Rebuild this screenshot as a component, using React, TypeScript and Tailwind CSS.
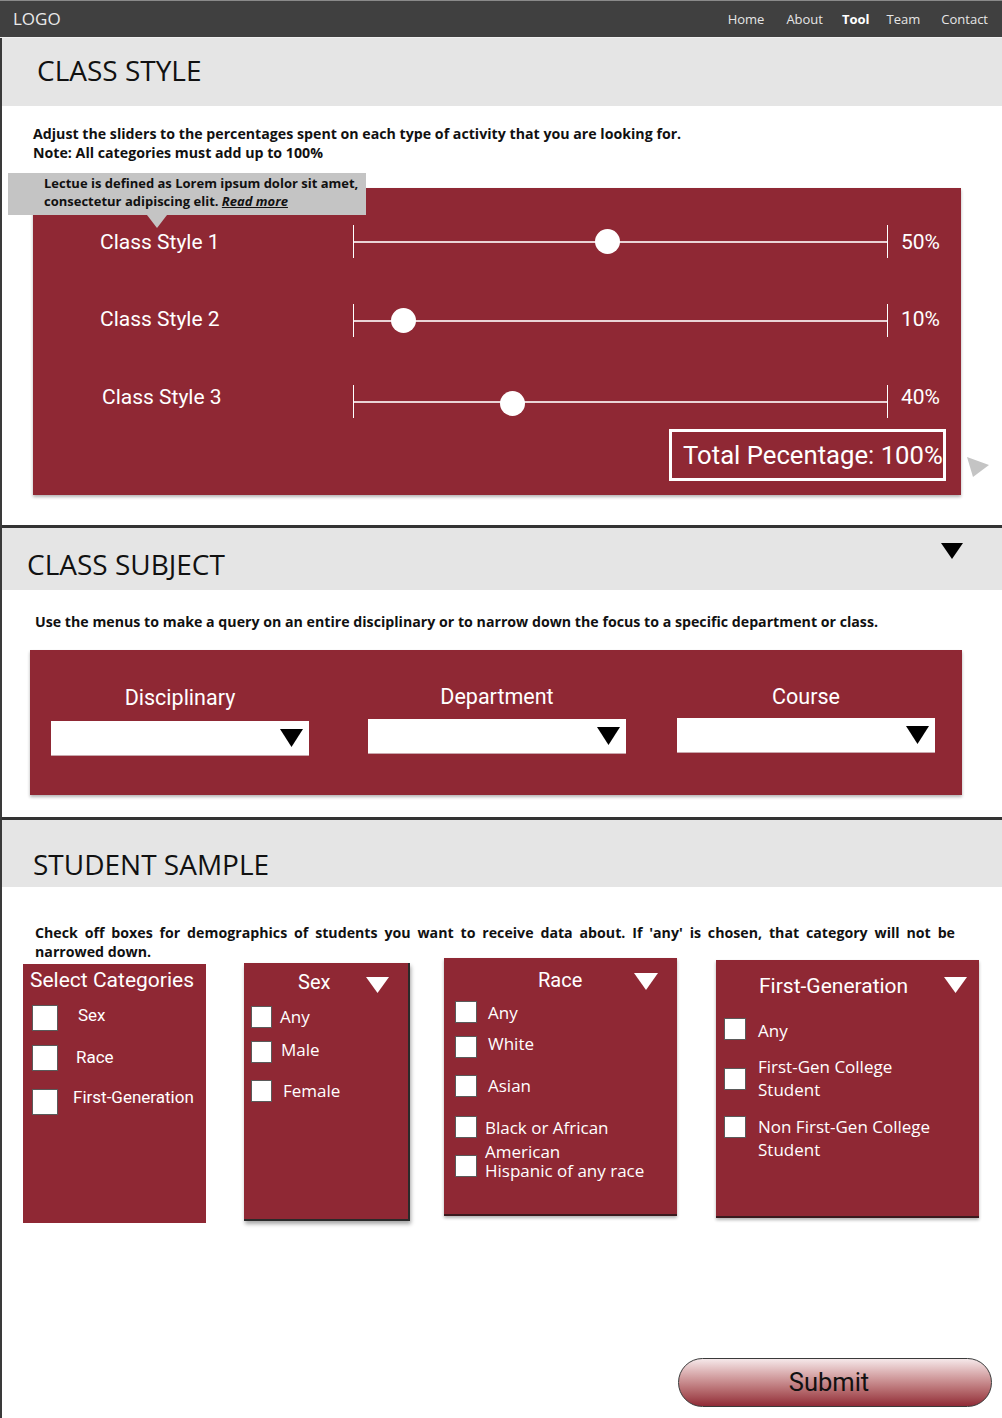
import React from 'react';

const Tri = ({ className }: { className?: string }) => (
  <svg viewBox="0 0 24 18" preserveAspectRatio="none" className={className}>
    <polygon points="0,0 24,0 12,18" fill="currentColor" />
  </svg>
);

const Box = ({ className = '' }: { className?: string }) => (
  <div className={`shrink-0 bg-white border border-[#5a5a5a] ${className}`} />
);

const sliders = [
  { label: 'Class Style 1', pos: 254, pct: '50%', top: 'mt-[37px]', pl: 'pl-[67px]', fix: '', thumbTop: 4 },
  { label: 'Class Style 2', pos: 50, pct: '10%', top: 'mt-[46px]', pl: 'pl-[67px]', fix: 'mb-[4px]', thumbTop: 4 },
  { label: 'Class Style 3', pos: 159, pct: '40%', top: 'mt-[48px]', pl: 'pl-[69px]', fix: 'mb-[9px]', thumbTop: 6 },
];

const Slider = ({ pos, thumbTop }: { pos: number; thumbTop: number }) => (
  <div className="relative w-[535px] h-[33px] border-x-[1.5px] border-white shrink-0">
    <div className="absolute left-0 right-0 top-[16px] h-[2px] bg-[#ead3d6]" />
    <div
      className="absolute w-[25px] h-[25px] rounded-full bg-white"
      style={{ left: pos - 13, top: thumbTop }}
    />
  </div>
);

const App = () => {
  return (
    <div className="relative w-[1002px] min-h-[1418px] bg-white font-['Open_Sans',sans-serif] text-[#111]">
      {/* nav */}
      <div className="h-[38px] bg-[#404040] border-t border-[#8a8a8a] border-b border-b-[#f0f0f0] flex items-center justify-between pl-[13px] pr-[14px]">
        <span className="text-[17px] text-[#eaeaea]">LOGO</span>
        <nav className="flex text-[13px] text-[#e6e6e6] pt-[1px]">
          <span>Home</span>
          <span className="ml-[22px]">About</span>
          <span className="ml-[19px] font-bold text-white">Tool</span>
          <span className="ml-[17px]">Team</span>
          <span className="ml-[21px]">Contact</span>
        </nav>
      </div>

      <div className="border-l-2 border-[#3a3a3a] min-h-[1380px]">
        {/* class style */}
        <div className="h-[68px] bg-[#e5e5e5] flex items-center pl-[35px]">
          <h1 className="text-[28px] pb-[4px]">CLASS STYLE</h1>
        </div>
        <div className="pt-[18px] pl-[31px] pb-[30px]">
          <p className="text-[14.2px] font-bold leading-[19px]">
            Adjust the sliders to the percentages spent on each type of activity that you are looking for.
            <br />
            Note: All categories must add up to 100%
          </p>
          <div className="relative mt-[26px] w-[928px] h-[307px] bg-[#8f2834] shadow-[0_2px_3px_rgba(0,0,0,0.3)] font-['Roboto',sans-serif] text-white flex flex-col">
            {sliders.map((s) => (
              <div key={s.label} className={`flex items-center ${s.top}`}>
                <div className={`w-[320px] text-[21px] leading-[24px] ${s.pl} ${s.fix}`}>{s.label}</div>
                <Slider pos={s.pos} thumbTop={s.thumbTop} />
                <div className={`ml-[13px] text-[21px] leading-[24px] ${s.fix}`}>{s.pct}</div>
              </div>
            ))}
            <div className="flex justify-end mr-[15px] mt-[11px]">
              <div className="w-[277px] h-[52px] border-[3px] border-white flex items-center pl-[11px] text-[25.7px] whitespace-nowrap">
                Total Pecentage: 100%
              </div>
            </div>
            <svg className="absolute left-[932px] top-[267px] w-[26px] h-[24px]" viewBox="0 0 26 24">
              <polygon points="2,2 24,10 8,22" fill="#c4c4c4" />
            </svg>
          </div>
        </div>

        {/* class subject */}
        <div className="border-t-[3px] border-[#333]">
          <div className="h-[62px] bg-[#e5e5e5] flex justify-between pl-[25px] pr-[39px]">
            <h2 className="text-[28px] pt-[17px] leading-[38px]">CLASS SUBJECT</h2>
            <Tri className="w-[22px] h-[16px] mt-[15px] text-black" />
          </div>
          <div className="pt-[22px] pl-[33px] pb-[22px]">
            <p className="text-[14.2px] font-bold leading-[19px]">
              Use the menus to make a query on an entire disciplinary or to narrow down the focus to a specific department or class.
            </p>
            <div className="mt-[19px] ml-[-5px] w-[932px] h-[145px] bg-[#8f2834] shadow-[0_2px_3px_rgba(0,0,0,0.3)] font-['Roboto',sans-serif] text-white text-[21.5px] flex items-start pl-[21px]">
              {[
                { t: 'Disciplinary', ml: '', pt: 'pt-[36px]', mt: 'mt-[11px]' },
                { t: 'Department', ml: 'ml-[59px]', pt: 'pt-[35px]', mt: 'mt-[10px]' },
                { t: 'Course', ml: 'ml-[51px]', pt: 'pt-[35px]', mt: 'mt-[9px]' },
              ].map((c) => (
                <div key={c.t} className={`w-[258px] flex flex-col items-center ${c.ml} ${c.pt}`}>
                  <div className="leading-[24px]">{c.t}</div>
                  <div className={`w-[258px] h-[35px] bg-white border-b border-[#c9a7ac] flex items-center justify-end pr-[6px] ${c.mt}`}>
                    <Tri className="w-[23px] h-[18px] text-black" />
                  </div>
                </div>
              ))}
            </div>
          </div>
        </div>

        {/* student sample */}
        <div className="border-t-[3px] border-[#333]">
          <div className="h-[67px] bg-[#e5e5e5] pl-[31px]">
            <h2 className="text-[28px] pt-[25px] leading-[38px]">STUDENT SAMPLE</h2>
          </div>
          <p className="mt-[36px] ml-[33px] w-[920px] text-[14.2px] font-bold leading-[19px] text-justify">
            Check off boxes for demographics of students you want to receive data about. If 'any' is chosen, that category will not be narrowed down.
          </p>

          <div className="flex items-start pl-[21px] mt-[-5px]">
            {/* select categories */}
            <div className="mt-[8px] w-[183px] h-[259px] bg-[#8f2834] font-['Roboto',sans-serif] text-white pl-[7px] pt-[4px]">
              <div className="text-[21px] leading-[24px]">Select Categories</div>
              <div className="flex items-start mt-[13px] pl-[2px]">
                <Box className="w-[26px] h-[26px]" />
                <span className="ml-[20px] text-[17px] leading-[22px] mt-[-1px]">Sex</span>
              </div>
              <div className="flex items-start mt-[14px] pl-[2px]">
                <Box className="w-[26px] h-[26px]" />
                <span className="ml-[18px] text-[17px] leading-[22px] mt-[1px]">Race</span>
              </div>
              <div className="flex items-start mt-[18px] pl-[2px]">
                <Box className="w-[26px] h-[26px]" />
                <span className="ml-[15px] text-[17px] leading-[22px] mt-[-3px]">First-Generation</span>
              </div>
            </div>

            {/* sex */}
            <div className="ml-[38px] mt-[7px] w-[166px] h-[258px] bg-[#8f2834] border-r-2 border-b-2 border-[#2a2a2a] shadow-[1px_3px_4px_rgba(0,0,0,0.35)] text-white text-[17px]">
              <div className="flex items-start">
                <span className="ml-[54px] mt-[7px] font-['Roboto',sans-serif] text-[20px] leading-[24px]">Sex</span>
                <Tri className="ml-[36px] mt-[14px] w-[23px] h-[16px] text-white" />
              </div>
              <div className="pl-[7px]">
                <div className="flex items-start mt-[12px]">
                  <Box className="w-[21px] h-[22px]" />
                  <span className="ml-[8px] leading-[22px]">Any</span>
                </div>
                <div className="flex items-start mt-[13px]">
                  <Box className="w-[21px] h-[22px]" />
                  <span className="ml-[9px] leading-[22px] mt-[-2px]">Male</span>
                </div>
                <div className="flex items-start mt-[17px]">
                  <Box className="w-[21px] h-[22px]" />
                  <span className="ml-[11px] leading-[22px]">Female</span>
                </div>
              </div>
            </div>

            {/* race */}
            <div className="ml-[34px] mt-[2px] w-[233px] h-[258px] bg-[#8f2834] border-b-2 border-[#3a1a1e] shadow-[0_2px_3px_rgba(0,0,0,0.3)] text-white text-[17px]">
              <div className="flex items-start">
                <span className="ml-[94px] mt-[10px] font-['Roboto',sans-serif] text-[20px] leading-[24px]">Race</span>
                <Tri className="ml-[52px] mt-[15px] w-[24px] h-[17px] text-white" />
              </div>
              <div className="pl-[11px]">
                <div className="flex items-start mt-[9px]">
                  <Box className="w-[22px] h-[22px]" />
                  <span className="ml-[11px] leading-[22px] mt-[1px]">Any</span>
                </div>
                <div className="flex items-start mt-[12px]">
                  <Box className="w-[22px] h-[22px]" />
                  <span className="ml-[11px] leading-[22px] mt-[-3px]">White</span>
                </div>
                <div className="flex items-start mt-[17px]">
                  <Box className="w-[22px] h-[22px]" />
                  <span className="ml-[11px] leading-[22px]">Asian</span>
                </div>
                <div className="flex items-start mt-[19px] mb-[-9px]">
                  <Box className="w-[22px] h-[22px]" />
                  <span className="ml-[8px] leading-[24px]">
                    Black or African
                    <br />
                    American
                  </span>
                </div>
                <div className="flex items-start">
                  <Box className="w-[22px] h-[22px]" />
                  <span className="ml-[8px] leading-[22px] mt-[5px]">Hispanic of any race</span>
                </div>
              </div>
            </div>

            {/* first generation */}
            <div className="ml-[39px] mt-[4px] w-[263px] h-[258px] bg-[#8f2834] border-b-2 border-[#3a1a1e] shadow-[0_2px_3px_rgba(0,0,0,0.3)] text-white text-[17px]">
              <div className="flex items-start">
                <span className="ml-[43px] mt-[13px] font-['Roboto',sans-serif] text-[21px] leading-[26px]">First-Generation</span>
                <Tri className="ml-auto mr-[12px] mt-[17px] w-[23px] h-[16px] text-white" />
              </div>
              <div className="pl-[8px]">
                <div className="flex items-start mt-[19px]">
                  <Box className="w-[22px] h-[22px]" />
                  <span className="ml-[12px] leading-[23px] mt-[1px]">Any</span>
                </div>
                <div className="flex items-start mt-[13px]">
                  <Box className="w-[22px] h-[22px] mt-[13px]" />
                  <span className="ml-[12px] leading-[23px]">
                    First-Gen College
                    <br />
                    Student
                  </span>
                </div>
                <div className="flex items-start mt-[14px]">
                  <Box className="w-[22px] h-[22px] mt-[1px]" />
                  <span className="ml-[12px] leading-[23px]">
                    Non First-Gen College
                    <br />
                    Student
                  </span>
                </div>
              </div>
            </div>
          </div>

          <div className="flex justify-end pr-[10px] mt-[135px] pb-[10px]">
            <button className="w-[314px] h-[49px] rounded-full border border-[#3a3a3a] bg-gradient-to-b from-[#f5e8ea] to-[#902a37] font-['Roboto',sans-serif] text-[25.5px] text-[#111] pr-[12px]">
              Submit
            </button>
          </div>
        </div>
      </div>

      {/* tooltip */}
      <div className="absolute left-[8px] top-[173px] w-[358px] h-[42px] bg-[#c4c4c4] pl-[36px] pt-[1px] text-[13px] font-bold leading-[18px]">
        Lectue is defined as Lorem ipsum dolor sit amet,
        <br />
        consectetur adipiscing elit. <span className="italic underline">Read more</span>
        <svg className="absolute left-[139px] top-[42px] w-[20px] h-[13px]" viewBox="0 0 20 13">
          <polygon points="0,0 20,0 10,13" fill="#c4c4c4" />
        </svg>
      </div>
    </div>
  );
};

export default App;
